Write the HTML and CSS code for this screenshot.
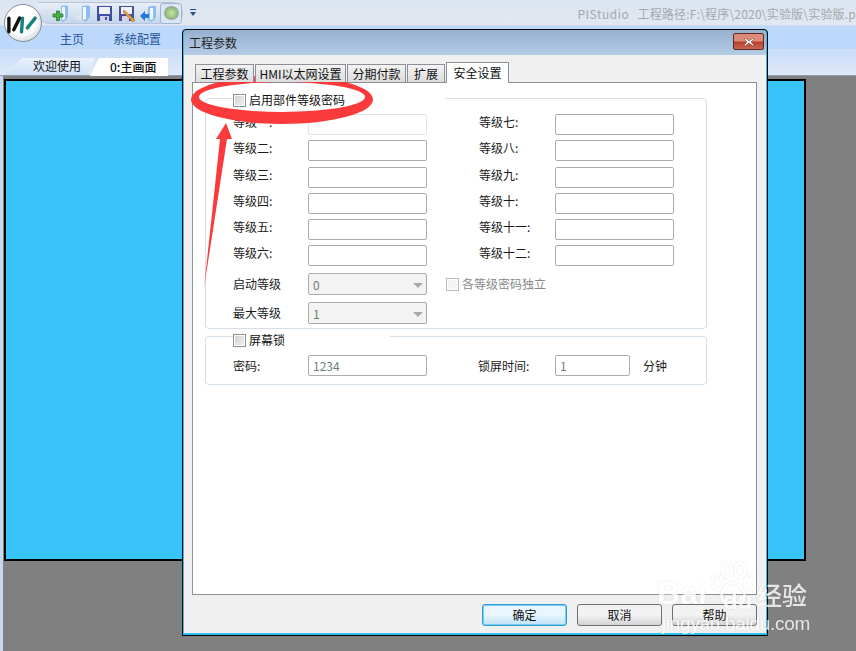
FILE: index.html
```html
<!DOCTYPE html>
<html lang="zh">
<head>
<meta charset="utf-8">
<title>PIStudio</title>
<link rel="stylesheet" href="styles.css">
</head>
<body>
<div class="app">
  <header class="titlebar">
    <div class="qat">
      <svg class="qat-icon" viewBox="0 0 17 17"><path d="M9 1q5-1 7 0v11q-2 3-5 5L9 15z" fill="#8dbdf0"/><path d="M10 2h3v12l-3 1z" fill="#f4f9ff"/><path d="M1 9h3.500V6h3v3H11v3H7.500v3.500h-3V12H1z" fill="#45b045" stroke="#1d6e1d" stroke-width=".7"/></svg>
      <svg class="qat-icon" viewBox="0 0 17 17"><path d="M8 1q5-1 8 0v11q-2 3-5 5L8 15z" fill="#8dbdf0"/><path d="M9 2h3v12l-3 1z" fill="#f4f9ff"/><path d="M1 13l6-4v6z" fill="#e3e6ea"/></svg>
      <svg class="qat-icon" viewBox="0 0 17 17"><path d="M1 1h15v15H1z" fill="#3e4fa5"/><path d="M3 2h11v7H3z" fill="#eef1fa"/><path d="M4 11h9v5H4z" fill="#d0d4e4"/><path d="M9 12h2v3H9z" fill="#3e4fa5"/></svg>
      <svg class="qat-icon" viewBox="0 0 17 17"><path d="M1 1h15v15H1z" fill="#4a4f9c"/><path d="M3 2h11v7H3z" fill="#eef1fa"/><path d="M4 11h7v5H4z" fill="#d0d4e4"/><path d="M6 5l11 10-2 2L5 7z" fill="#e8a23a" stroke="#8a5a14" stroke-width=".5"/></svg>
      <svg class="qat-icon" viewBox="0 0 17 17"><path d="M8 2q5-2 8-1v11q-2 3-5 5L8 15z" fill="#8dbdf0"/><path d="M10 3h3v11l-3 1z" fill="#f4f9ff"/><path d="M0 11l5-5v3h4v4H5v3z" fill="#2478d6"/></svg>
      <span class="run-btn"><span class="run-dot"></span></span>
    </div>
    <svg class="qat-more" viewBox="0 0 8 10"><path d="M1 1h6v1H1zM1 4h6L4 8z" fill="#2a4f8e"/></svg>
    <p class="app-title"><span class="app-name">PIStudio</span>工程路径:F:\程序\2020\实验版\实验版.p</p>
  </header>
  <nav class="ribbon">
    <span class="ribbon-item">主页</span>
    <span class="ribbon-item">系统配置</span>
  </nav>
  <div class="doc-tabs">
    <span class="doc-tab">欢迎使用</span>
    <span class="doc-tab doc-tab-active">0:主画面</span>
  </div>
  <main class="workspace">
    <div class="canvas"></div>
  </main>
</div>

<div class="logo">
  <svg viewBox="4 4 37 38" width="37" height="38">
    <path d="M8 18v14" stroke="#111" stroke-width="3.500" stroke-linecap="round"/>
    <path d="M13 30l6-12" stroke="#111" stroke-width="3.500" stroke-linecap="round"/>
    <path d="M21 32l1-14" stroke="#17807c" stroke-width="3.500" stroke-linecap="round"/>
    <path d="M27 28l8-10" stroke="#17807c" stroke-width="3.500" stroke-linecap="round"/>
  </svg>
</div>

<section class="dialog">
  <div class="dialog-title">
    <span>工程参数</span>
    <span class="close-btn">
      <svg viewBox="0 0 12 10" width="12" height="10"><path d="M2 1l4 3 4-3 1 1-3 3 3 3-1 1-4-3-4 3-1-1 3-3-3-3z" fill="#fff" stroke="#5a2a22" stroke-width=".5"/></svg>
    </span>
  </div>
  <div class="dialog-body">
    <div class="tabs">
      <span class="tab tab-1">工程参数</span>
      <span class="tab tab-2">HMI以太网设置</span>
      <span class="tab tab-3">分期付款</span>
      <span class="tab tab-4">扩展</span>
      <span class="tab tab-active">安全设置</span>
    </div>
    <div class="tab-page">
      <fieldset class="group group-levels">
        <legend class="legend legend-levels"><span class="check"></span><span>启用部件等级密码</span></legend>
        <div class="level-grid">
          <label class="lab">等级一:</label><span class="input input-faint"></span>
          <label class="lab">等级七:</label><span class="input"></span>
          <label class="lab">等级二:</label><span class="input"></span>
          <label class="lab">等级八:</label><span class="input"></span>
          <label class="lab">等级三:</label><span class="input"></span>
          <label class="lab">等级九:</label><span class="input"></span>
          <label class="lab">等级四:</label><span class="input"></span>
          <label class="lab">等级十:</label><span class="input"></span>
          <label class="lab">等级五:</label><span class="input"></span>
          <label class="lab">等级十一:</label><span class="input"></span>
          <label class="lab">等级六:</label><span class="input"></span>
          <label class="lab">等级十二:</label><span class="input"></span>
        </div>
        <div class="select-rows">
          <div class="select-row">
            <label class="lab">启动等级</label>
            <span class="select">0<i class="caret"></i></span>
            <span class="check-line"><span class="check check-off"></span>各等级密码独立</span>
          </div>
          <div class="select-row">
            <label class="lab">最大等级</label>
            <span class="select select-green">1<i class="caret"></i></span>
          </div>
        </div>
      </fieldset>
      <fieldset class="group group-lock">
        <legend class="legend legend-lock"><span class="check"></span><span>屏幕锁</span></legend>
        <div class="lock-row">
          <label class="lab">密码:</label>
          <span class="input input-val">1234</span>
          <label class="lab lab-lock">锁屏时间:</label>
          <span class="input input-val input-short">1</span>
          <span class="lab unit">分钟</span>
        </div>
      </fieldset>
    </div>
    <div class="dialog-actions">
      <button class="btn btn-primary">确定</button>
      <button class="btn">取消</button>
      <button class="btn">帮助</button>
    </div>
  </div>
</section>

<svg class="annotation" viewBox="0 0 856 651" width="856" height="651">
  <path fill-rule="evenodd" fill="#fb3a3c" d="M191 99.500a91 24.500 0 1 0 182 0a91 24.500 0 1 0 -182 0ZM199 97a83 15 0 1 1 166 0a83 15 0 1 1 -166 0Z"/>
  <path d="M204 288L220 139L216 139L226 123L232 139L227 139Z" fill="#fb3a3c"/>
</svg>

<div class="watermark">
  <svg class="paw" viewBox="0 0 46 44" width="46" height="44">
    <g fill="none" stroke="#fff" stroke-width="2.500">
      <ellipse cx="7" cy="20" rx="5" ry="8"/>
      <ellipse cx="17" cy="8" rx="5" ry="7"/>
      <ellipse cx="30" cy="8" rx="5" ry="7"/>
      <ellipse cx="40" cy="20" rx="5" ry="8"/>
      <path d="M23 21c7 0 13 9 11 16-2 6-7 3-11 3s-9 3-11-3c-2-7 4-16 11-16z"/>
    </g>
  </svg>
  <span class="wm-bai">Bai</span>
  <span class="wm-du">du</span>
  <span class="wm-jy">经验</span>
  <span class="wm-url">jingyan.baidu.com</span>
</div>
</body>
</html>
```
FILE: styles.css
```css
* { box-sizing: border-box; }
html, body { margin: 0; padding: 0; width: 856px; height: 651px; overflow: hidden; }
body {
  position: relative;
  font-family: "Noto Sans CJK SC", "Liberation Sans", sans-serif;
  font-size: 12px;
  color: #111;
  background: #808080;
}
.app { display: flex; flex-direction: column; height: 651px; }

.titlebar {
  height: 26px;
  display: flex;
  align-items: flex-start;
  padding: 2px 0 0 38px;
  background: linear-gradient(#dbe4ef, #e2e8f1);
  border-bottom: 1px solid #cfdcec;
  white-space: nowrap;
  overflow: hidden;
}
.qat {
  width: 153px;
  height: 22px;
  display: flex;
  align-items: center;
  gap: 5px;
  padding: 0 0 0 14px;
  background: linear-gradient(#e8eef6, #c5d6ec);
  border: 1px solid #b4c5dc;
  border-left: 0;
  border-radius: 0 11px 11px 12px;
}
.qat-icon { width: 17px; height: 17px; flex: none; }
.run-btn {
  width: 22px; height: 21px; margin-left: -2px;
  display: flex; align-items: center; justify-content: center;
  background: #dce6f3;
  border: 1px solid #9fb4d0;
  border-radius: 3px;
}
.run-dot {
  width: 15px; height: 14px; border-radius: 50%;
  background: radial-gradient(#c4e4a0, #8fb77a 70%, #a9b8a4);
  border: 1px solid #9aa89a;
}
.qat-more { width: 8px; height: 10px; margin: 6px 0 0 6px; flex: none; }
.app-title {
  margin: 3px 0 0 380px;
  font-size: 12px;
  line-height: 18px;
  color: #a3a8ae;
  letter-spacing: .2px;
}
.app-name { display: inline-block; width: 60px; letter-spacing: .5px; }

.ribbon {
  height: 25px;
  display: flex;
  gap: 29px;
  padding-left: 60px;
  line-height: 26px;
  color: #25569b;
  background: #bdd8fb;
  border-bottom: 2px solid #ccdff5;
}
.ribbon-item { display: block; }

.doc-tabs {
  height: 25px;
  display: flex;
  align-items: flex-end;
  padding-left: 5px;
  background: linear-gradient(#c9def8, #dfeafa);
  border-bottom: 1px solid #8b9db3;
}
.doc-tab {
  width: 90px;
  height: 17px;
  line-height: 16px;
  padding-left: 28px;
  background: linear-gradient(#e9f2fd, #cfe1f8);
  clip-path: polygon(0 100%, 17px 0, 100% 0, 92% 100%);
}
.doc-tab-active {
  width: 78px;
  height: 18px;
  padding-left: 20px;
  margin-left: -5px;
  margin-bottom: -1px;
  line-height: 17px;
  font-weight: 500;
  background: #fff;
  clip-path: polygon(0 100%, 9px 0, 100% 0, 100% 100%);
}

.workspace {
  flex: 1;
  padding: 3px 0 0 1px;
  background: #808080;
  border-left: 3px solid #c6d8f0;
}
.canvas {
  width: 802px;
  height: 482px;
  background: #38c4f8;
  border: 2px solid #000;
}

.logo {
  position: absolute;
  left: 4px; top: 4px;
  width: 38px; height: 38px;
  border-radius: 50%;
  background: radial-gradient(circle at 45% 40%, #fff 50%, #d5dbe3 78%, #98a1ac);
  border: 1px solid #858f9b;
  display: flex; align-items: center; justify-content: center;
}

.dialog {
  position: absolute;
  left: 182px; top: 29px;
  width: 586px; height: 607px;
  border: 1px solid #000;
  border-radius: 4px 4px 0 0;
  background: #2ec0ee;
  padding: 0 1px 2px 1px;
  display: flex;
  flex-direction: column;
}
.dialog-title {
  height: 25px;
  flex: none;
  display: flex;
  justify-content: space-between;
  padding: 4px 2px 0 5px;
  line-height: 18px;
  font-size: 12px;
  color: #222;
  background: linear-gradient(#95b0cf, #b5cce6);
  border-radius: 3px 3px 0 0;
}
.close-btn {
  width: 31px; height: 17px;
  margin-top: -1px;
  display: flex; align-items: center; justify-content: center;
  background: linear-gradient(#dd8a78 0 45%, #b8402a 55%, #c9675a);
  border: 1px solid #5e2a28;
  border-radius: 2px;
}
.dialog-body {
  flex: 1;
  background: #f0f0f0;
  padding: 6px 0 0 8px;
  display: flex;
  flex-direction: column;
}
.tabs {
  height: 21px;
  flex: none;
  display: flex;
  align-items: flex-end;
  position: relative;
  z-index: 1;
  margin-left: 3px;
}
.tab {
  height: 18px;
  line-height: 17px;
  text-align: center;
  background: linear-gradient(#f3f3f3, #dcdcdc);
  border: 1px solid #8f8f99;
  border-bottom: 0;
  margin-right: 1px;
}
.tab-1 { width: 59px; }
.tab-2 { width: 91px; }
.tab-3 { width: 59px; }
.tab-4 { width: 38px; }
.tab-active {
  width: 63px;
  height: 21px;
  line-height: 19px;
  background: #fff;
  margin-bottom: -1px;
  position: relative;
}
.tab-page {
  width: 565px;
  height: 513px;
  flex: none;
  background: #fff;
  border: 1px solid #8f8f99;
  padding: 8px 0 0 12px;
}
.group {
  display: block;
  margin: 0;
  padding: 0 0 0 27px;
  width: 502px;
  border: 1px solid #d5dfe9;
  border-radius: 4px;
  min-width: 0;
}
.group-levels { height: 238px; }
.group-lock { height: 54px; margin-top: 2px; }
.legend {
  padding: 0 2px 0 0;
  display: flex;
  align-items: flex-start;
  line-height: 18px;
  overflow: visible;
}
.legend-levels { width: 212px; height: 14px; }
.legend-lock { width: 157px; height: 10px; }
.check {
  width: 13px; height: 13px;
  margin: 3px 3px 0 0;
  flex: none;
  background: linear-gradient(135deg, #d0d0d0, #f3f3f3);
  border: 1px solid #8e8f8f;
  box-shadow: inset 0 0 0 1px #fff;
}
.check-off { background: #f4f4f4; border-color: #b8b8b8; margin-top: 0; }

.level-grid {
  display: grid;
  grid-template-columns: 75px 119px 53px 75px 119px;
  grid-auto-rows: 21px;
  row-gap: 5.3px;
  margin-top: 9px;
}
.level-grid .lab { margin-top: -1px; }
.level-grid .lab:nth-child(4n+3) { grid-column: 4; margin-left: -1px; }
.lab { line-height: 17px; color: #1a1a1a; white-space: nowrap; }
.input {
  display: block;
  height: 21px;
  width: 119px;
  background: #fff;
  border: 1px solid #ababab;
  border-radius: 2px;
  line-height: 20px;
  padding-left: 4px;
}
.input-faint { border-color: #e4e4e4; }
.input-val { color: #6e7f7f; }
.input-short { width: 75px; }

.select-rows { display: flex; flex-direction: column; gap: 7px; margin-top: 7px; }
.select-row { display: flex; align-items: center; height: 22px; }
.select-row .lab { width: 75px; margin-top: -2px; }
.select {
  position: relative;
  width: 119px; height: 22px;
  line-height: 21px;
  padding-left: 4px;
  color: #777;
  background: #f3f3f3;
  border: 1px solid #ababab;
  border-radius: 2px;
}
.select-green { color: #5a8a5a; }
.caret {
  position: absolute;
  right: 3px; top: 9px;
  border: 5px solid transparent;
  border-top: 5px solid #a9a9a9;
  border-bottom: 0;
}
.check-line { display: flex; align-items: center; margin-left: 19px; color: #888; line-height: 18px; }

.lock-row { display: flex; align-items: center; margin-top: 14px; }
.lock-row .lab:first-child { width: 75px; }
.lab-lock { margin-left: 51px; width: 77px; }
.unit { margin-left: 13px; }

.dialog-actions {
  display: flex;
  gap: 10px;
  padding: 9px 0 0 290px;
}
.btn {
  width: 85px; height: 22px;
  padding: 0;
  font: inherit;
  line-height: 18px;
  color: #111;
  background: linear-gradient(#f2f2f2 50%, #d4d4d4);
  border: 1px solid #707070;
  border-radius: 3px;
}
.btn-primary {
  background: linear-gradient(#eaf6fd 45%, #bfe3f8);
  border: 1px solid #2c9bd6;
  box-shadow: 0 0 0 1px #7ccbf0 inset;
}

.annotation { position: absolute; left: 0; top: 0; pointer-events: none; }

.watermark {
  position: absolute;
  left: 650px; top: 555px;
  width: 170px; height: 80px;
  color: #fff;
  opacity: .8;
  filter: drop-shadow(0 0 1px rgba(120, 120, 120, .2));
  font-family: "Liberation Sans", sans-serif;
}
.watermark span { position: absolute; white-space: nowrap; }
.paw { position: absolute; left: 60px; top: 7px; }
.wm-bai { left: 7px; top: 22px; font-size: 32px; font-weight: 700; line-height: 32px; }
.wm-du { left: 73px; top: 34px; font-size: 24px; font-weight: 700; line-height: 24px; }
.wm-jy {
  left: 107px; top: 23px;
  font-family: "Noto Sans CJK SC", sans-serif;
  font-size: 25px; font-weight: 500; line-height: 32px;
}
.wm-url { left: 12px; top: 58px; font-size: 19px; line-height: 22px; letter-spacing: -.3px; }
```
